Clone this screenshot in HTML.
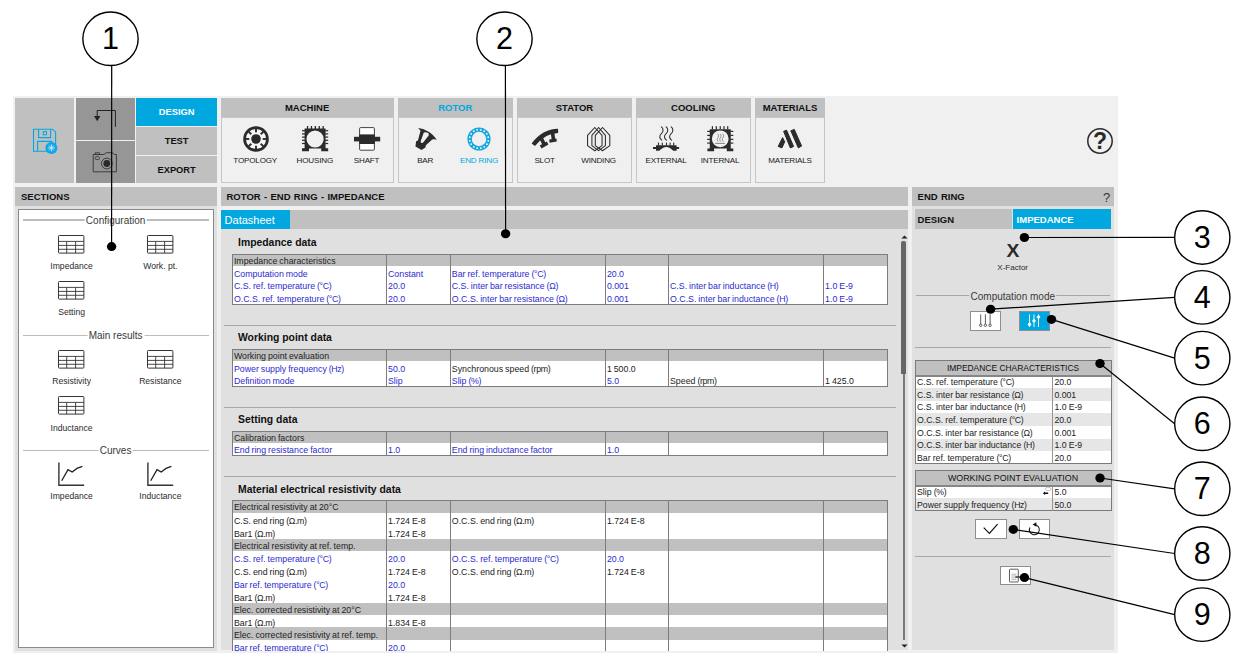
<!DOCTYPE html>
<html lang="en"><head><meta charset="utf-8"><title>Rotor - End ring - Impedance</title>
<style>
html,body{margin:0;padding:0;background:#fff;}
body{width:1243px;height:662px;overflow:hidden;font-family:"Liberation Sans",sans-serif;}
#page{position:relative;width:1243px;height:662px;overflow:hidden;background:#fff;}
#page div{position:absolute;box-sizing:border-box;}
#page svg{position:absolute;overflow:visible;}
.t{white-space:nowrap;line-height:1;transform:translateY(-50%);color:#222;}
.t.c{transform:translate(-50%,-50%);}
.hd{font-weight:bold;font-size:9.5px;color:#111;word-spacing:0.7px;}
.tab{font-weight:bold;font-size:9.3px;color:#111;}
.grp{font-weight:bold;font-size:9.5px;color:#111;}
.il{font-size:8.1px;color:#1a1a1a;letter-spacing:-0.2px;}
.sec{font-size:10px;color:#3a3a3a;}
.sl{font-size:8.6px;color:#2a2a2a;}
.ds{font-size:11px;color:#fff;}
.dt{font-weight:bold;font-size:10.4px;color:#111;margin-top:1px;}
.tx{font-size:8.8px;color:#222;word-spacing:-0.5px;}
.u{letter-spacing:-0.35px;}
.bl{color:#2b2bd0;}
.rh{font-size:8.45px;color:#111;}
.rt{font-size:8.72px;color:#222;word-spacing:-0.3px;}
.xf{font-weight:bold;font-size:18.2px;color:#2b2b2b;}
.t.c.xf{transform:translate(-50%,-50%) scaleX(1.06);}

</style></head><body>
<div id="page">
<div style="left:13px;top:96px;width:1105px;height:557px;background:#f0f0f0;"></div>
<div style="left:15px;top:98px;width:59.3px;height:85px;background:#c0c0c0;"></div>
<div style="left:75.5px;top:98px;width:59.5px;height:41.5px;background:#969696;"></div>
<div style="left:75.5px;top:141px;width:59.5px;height:42px;background:#969696;"></div>
<div style="left:136px;top:98px;width:81px;height:27.5px;background:#00a8df;"></div>
<div style="left:136px;top:127px;width:81px;height:27.5px;background:#c0c0c0;"></div>
<div style="left:136px;top:156px;width:81px;height:27px;background:#c0c0c0;"></div>
<div class="t c tab" style="left:176.6px;top:113.2px;color:#fff;">DESIGN</div>
<div class="t c tab" style="left:176.6px;top:142px;">TEST</div>
<div class="t c tab" style="left:176.6px;top:171px;">EXPORT</div>
<svg style="left:30px;top:125px" width="32" height="32" viewBox="0 0 32 32">
<path d="M3.5 4.2 H22.6 L25.6 7.2 V26.3 H3.5 Z" fill="none" stroke="#00a8df" stroke-width="1.1"/>
<path d="M8.6 4.2 V12.6 H20.6 V4.2" fill="none" stroke="#00a8df" stroke-width="1.1"/>
<rect x="13.3" y="6.6" width="3.2" height="3.2" fill="none" stroke="#00a8df" stroke-width="1"/>
<path d="M7.6 26.3 V16.4 H21.6 V18" fill="none" stroke="#00a8df" stroke-width="1.1"/>
<circle cx="21.4" cy="22.9" r="6" fill="#0ea6ea"/>
<g stroke="#e8f6fd" stroke-width="0.75" stroke-linecap="round"><path d="M21.4 19.7 V26.1"/><path d="M18.2 22.9 H24.6"/><path d="M19.15 20.65 L23.65 25.15"/><path d="M23.65 20.65 L19.15 25.15"/></g>
</svg>
<svg style="left:90px;top:105px" width="32" height="26" viewBox="0 0 32 26">
<path d="M7.2 11 V5.5 H25.4 V21.9" fill="none" stroke="#222" stroke-width="1"/>
<path d="M4 11 H10.4 L7.2 16.2 Z" fill="#222"/>
</svg>
<svg style="left:90px;top:150px" width="32" height="26" viewBox="0 0 32 26">
<path d="M3.2 4.5 H14 L16.2 2.7 H22.6 L24.2 4.5 H26.4 V21.8 H3.2 Z" fill="none" stroke="#333" stroke-width="0.9"/>
<rect x="5.3" y="2.8" width="4.2" height="1.7" fill="none" stroke="#333" stroke-width="0.8"/>
<rect x="5.2" y="6.7" width="4.2" height="2.8" rx="0.9" fill="none" stroke="#333" stroke-width="0.8"/>
<circle cx="16.8" cy="13.5" r="5.4" fill="none" stroke="#333" stroke-width="0.9"/>
<circle cx="16.8" cy="13.5" r="3.4" fill="#2a2a2a"/>
</svg>
<div style="left:220.6px;top:98px;width:173.00000000000003px;height:18.5px;background:#c0c0c0;"></div>
<div style="left:220.6px;top:116.5px;width:173.00000000000003px;height:66px;background:#f0f0f0;border:1px solid #c6c6c6;"></div>
<div class="t c grp" style="left:307.1px;top:107.6px;color:#111;">MACHINE</div>
<div style="left:397.5px;top:98px;width:115.5px;height:18.5px;background:#c0c0c0;"></div>
<div style="left:397.5px;top:116.5px;width:115.5px;height:66px;background:#f0f0f0;border:1px solid #c6c6c6;"></div>
<div class="t c grp" style="left:455.25px;top:107.6px;color:#00a8df;">ROTOR</div>
<div style="left:517px;top:98px;width:115px;height:18.5px;background:#c0c0c0;"></div>
<div style="left:517px;top:116.5px;width:115px;height:66px;background:#f0f0f0;border:1px solid #c6c6c6;"></div>
<div class="t c grp" style="left:574.5px;top:107.6px;color:#111;">STATOR</div>
<div style="left:636px;top:98px;width:114.5px;height:18.5px;background:#c0c0c0;"></div>
<div style="left:636px;top:116.5px;width:114.5px;height:66px;background:#f0f0f0;border:1px solid #c6c6c6;"></div>
<div class="t c grp" style="left:693.25px;top:107.6px;color:#111;">COOLING</div>
<div style="left:755px;top:98px;width:70px;height:18.5px;background:#c0c0c0;"></div>
<div style="left:755px;top:116.5px;width:70px;height:66px;background:#f0f0f0;border:1px solid #c6c6c6;"></div>
<div class="t c grp" style="left:790.0px;top:107.6px;color:#111;">MATERIALS</div>
<div class="t c il" style="left:255.2px;top:160.7px;">TOPOLOGY</div>
<div class="t c il" style="left:314.8px;top:160.7px;">HOUSING</div>
<div class="t c il" style="left:366.6px;top:160.7px;">SHAFT</div>
<div class="t c il" style="left:425.2px;top:160.7px;">BAR</div>
<div class="t c il" style="left:479px;top:160.7px;color:#00a8df;">END RING</div>
<div class="t c il" style="left:544.6px;top:160.7px;">SLOT</div>
<div class="t c il" style="left:598.6px;top:160.7px;">WINDING</div>
<div class="t c il" style="left:666px;top:160.7px;">EXTERNAL</div>
<div class="t c il" style="left:720px;top:160.7px;">INTERNAL</div>
<div class="t c il" style="left:790px;top:160.7px;">MATERIALS</div>
<svg style="left:242.8px;top:125.7px" width="26" height="26" viewBox="0 0 26 26">
<circle cx="13" cy="13" r="11.45" fill="#f6f6f6" stroke="#2b2b2b" stroke-width="2.7"/>
<path d="M19.70 13.00 L24.50 13.00" stroke="#2b2b2b" stroke-width="1.9"/><path d="M17.74 17.74 L21.13 21.13" stroke="#2b2b2b" stroke-width="1.9"/><path d="M13.00 19.70 L13.00 24.50" stroke="#2b2b2b" stroke-width="1.9"/><path d="M8.26 17.74 L4.87 21.13" stroke="#2b2b2b" stroke-width="1.9"/><path d="M6.30 13.00 L1.50 13.00" stroke="#2b2b2b" stroke-width="1.9"/><path d="M8.26 8.26 L4.87 4.87" stroke="#2b2b2b" stroke-width="1.9"/><path d="M13.00 6.30 L13.00 1.50" stroke="#2b2b2b" stroke-width="1.9"/><path d="M17.74 8.26 L21.13 4.87" stroke="#2b2b2b" stroke-width="1.9"/>
<circle cx="13" cy="13" r="4.8" fill="#2b2b2b"/>
</svg>
<svg style="left:301.8px;top:126.3px" width="26.2" height="25.4" viewBox="0 0 26.2 25.4">
<rect x="4.90" y="0" width="1.3" height="3" fill="#2b2b2b"/><rect x="8.80" y="0" width="1.3" height="3" fill="#2b2b2b"/><rect x="12.70" y="0" width="1.3" height="3" fill="#2b2b2b"/><rect x="16.60" y="0" width="1.3" height="3" fill="#2b2b2b"/><rect x="20.50" y="0" width="1.3" height="3" fill="#2b2b2b"/><rect x="0" y="4.10" width="3" height="1.2" fill="#2b2b2b"/><rect x="23.2" y="4.10" width="3" height="1.2" fill="#2b2b2b"/><rect x="0" y="7.30" width="3" height="1.2" fill="#2b2b2b"/><rect x="23.2" y="7.30" width="3" height="1.2" fill="#2b2b2b"/><rect x="0" y="10.50" width="3" height="1.2" fill="#2b2b2b"/><rect x="23.2" y="10.50" width="3" height="1.2" fill="#2b2b2b"/><rect x="0" y="13.70" width="3" height="1.2" fill="#2b2b2b"/><rect x="23.2" y="13.70" width="3" height="1.2" fill="#2b2b2b"/><rect x="0" y="16.90" width="3" height="1.2" fill="#2b2b2b"/><rect x="23.2" y="16.90" width="3" height="1.2" fill="#2b2b2b"/>
<path fill-rule="evenodd" fill="#2b2b2b" d="M2.6 2.6 H23.6 V22.2 H26.2 V25.2 H19.2 V22.6 H7 V25.2 H0 V22.2 H2.6 Z M13.1 4.4 A8.6 8.6 0 1 0 13.1 21.6 A8.6 8.6 0 1 0 13.1 4.4 Z"/>
</svg>
<svg style="left:353.8px;top:126.8px" width="26.2" height="24" viewBox="0 0 26.2 24">
<rect x="5.6" y="0.6" width="14.8" height="22.6" rx="1" fill="#fff" stroke="#2b2b2b" stroke-width="0.9"/>
<rect x="0" y="9.8" width="26.2" height="4.6" fill="#2b2b2b"/>
<rect x="5.2" y="7.4" width="15.6" height="9.6" fill="#2b2b2b"/>
</svg>
<svg style="left:414px;top:126px" width="24" height="26" viewBox="0 0 24 26">
<path fill-rule="evenodd" fill="#2b2b2b" d="M4.16 2.08 C10.4 2.7 18.3 6.9 22.75 13.64 L20.5 13.3 Q18.9 13 18.2 13.5 L11.87 19.3 L11.4 21.57 L7.56 24.07 L1.44 20.44 L2.12 15.23 L3.93 14.55 L6.52 4.8 Z M10.05 6.52 Q11.5 5.8 13.9 6.84 Q15.3 7.8 14.68 9.56 L9.15 16.59 Q8 17.5 7.2 16.7 Q6.5 16 6.7 15.3 L9.55 7.2 Q9.7 6.7 10.05 6.52 Z"/>
</svg>
<svg style="left:466.7px;top:127px" width="24" height="24" viewBox="0 0 24 24">
<circle cx="12" cy="12" r="9.4" fill="none" stroke="#19a7e0" stroke-width="4.4"/>
<circle cx="21.22" cy="13.83" r="0.9" fill="#fff"/><circle cx="19.82" cy="17.22" r="0.9" fill="#fff"/><circle cx="17.22" cy="19.82" r="0.9" fill="#fff"/><circle cx="13.83" cy="21.22" r="0.9" fill="#fff"/><circle cx="10.17" cy="21.22" r="0.9" fill="#fff"/><circle cx="6.78" cy="19.82" r="0.9" fill="#fff"/><circle cx="4.18" cy="17.22" r="0.9" fill="#fff"/><circle cx="2.78" cy="13.83" r="0.9" fill="#fff"/><circle cx="2.78" cy="10.17" r="0.9" fill="#fff"/><circle cx="4.18" cy="6.78" r="0.9" fill="#fff"/><circle cx="6.78" cy="4.18" r="0.9" fill="#fff"/><circle cx="10.17" cy="2.78" r="0.9" fill="#fff"/><circle cx="13.83" cy="2.78" r="0.9" fill="#fff"/><circle cx="17.22" cy="4.18" r="0.9" fill="#fff"/><circle cx="19.82" cy="6.78" r="0.9" fill="#fff"/><circle cx="21.22" cy="10.17" r="0.9" fill="#fff"/>
</svg>
<svg style="left:530px;top:126px" width="30" height="26" viewBox="0 0 30 26">
<path d="M3.3 18.7 Q13.4 5.3 28.1 4.9" fill="none" stroke="#2b2b2b" stroke-width="4.2"/>
<path d="M10.75 11.4 L14.13 18.13" stroke="#2b2b2b" stroke-width="3.6"/>
<path d="M10.6 20.9 L17.6 16.9" stroke="#2b2b2b" stroke-width="3.4"/>
<path d="M22.5 6.6 L23.5 13.8" stroke="#2b2b2b" stroke-width="3.6"/>
<path d="M19.4 15.1 L26.6 14" stroke="#2b2b2b" stroke-width="3.2"/>
</svg>
<svg style="left:586px;top:126px" width="26" height="26" viewBox="0 0 26 26">
<path d="M1.56 19.6 V9.4 L8.80 1.5 L16.04 9.4 V19.6 L8.80 24.7 Z" fill="none" stroke="#2b2b2b" stroke-width="1.05" stroke-linejoin="round"/><path d="M5.90 19.6 V9.4 L12.65 1.5 L19.40 9.4 V19.6 L12.65 24.7 Z" fill="none" stroke="#2b2b2b" stroke-width="1.05" stroke-linejoin="round"/><path d="M9.30 19.6 V9.4 L16.55 1.5 L23.80 9.4 V19.6 L16.55 24.7 Z" fill="none" stroke="#2b2b2b" stroke-width="1.05" stroke-linejoin="round"/>
</svg>
<svg style="left:653px;top:126px" width="26.2" height="26" viewBox="0 0 26.2 26">
<path d="M8.40 0.90 C10.60 2.48 10.60 5.78 8.40 7.63 C6.20 9.41 6.20 12.32 8.76 14.10" fill="none" stroke="#2b2b2b" stroke-width="1.05" stroke-linecap="round"/><path d="M13.10 0.90 C15.30 2.48 15.30 5.78 13.10 7.63 C10.90 9.41 10.90 12.32 13.46 14.10" fill="none" stroke="#2b2b2b" stroke-width="1.05" stroke-linecap="round"/><path d="M18.20 0.90 C20.40 2.48 20.40 5.78 18.20 7.63 C16.00 9.41 16.00 12.32 18.56 14.10" fill="none" stroke="#2b2b2b" stroke-width="1.05" stroke-linecap="round"/>
<rect x="4.95" y="16.6" width="1.1" height="3" fill="#2b2b2b"/><rect x="8.75" y="16.6" width="1.1" height="3" fill="#2b2b2b"/><rect x="12.95" y="16.6" width="1.1" height="3" fill="#2b2b2b"/><rect x="16.55" y="16.6" width="1.1" height="3" fill="#2b2b2b"/><rect x="20.15" y="16.6" width="1.1" height="3" fill="#2b2b2b"/>
<path fill="#2b2b2b" d="M3 19.2 H23.6 V21 H26.1 V23 H23.6 V24.8 H20.3 Q13.5 17.2 6.2 24.8 H3 V23 H0 V21 H3 Z"/>
</svg>
<svg style="left:706.8px;top:126px" width="26.5" height="25.6" viewBox="0 0 26.5 25.6">
<rect x="4.80" y="0.2" width="1.2" height="3.2" fill="#2b2b2b"/><rect x="8.70" y="0.2" width="1.2" height="3.2" fill="#2b2b2b"/><rect x="12.65" y="0.2" width="1.2" height="3.2" fill="#2b2b2b"/><rect x="16.40" y="0.2" width="1.2" height="3.2" fill="#2b2b2b"/><rect x="20.10" y="0.2" width="1.2" height="3.2" fill="#2b2b2b"/><rect x="0.2" y="4.80" width="2.8" height="1.2" fill="#2b2b2b"/><rect x="23.5" y="4.80" width="2.8" height="1.2" fill="#2b2b2b"/><rect x="0.2" y="8.80" width="2.8" height="1.2" fill="#2b2b2b"/><rect x="23.5" y="8.80" width="2.8" height="1.2" fill="#2b2b2b"/><rect x="0.2" y="12.80" width="2.8" height="1.2" fill="#2b2b2b"/><rect x="23.5" y="12.80" width="2.8" height="1.2" fill="#2b2b2b"/><rect x="0.2" y="16.50" width="2.8" height="1.2" fill="#2b2b2b"/><rect x="23.5" y="16.50" width="2.8" height="1.2" fill="#2b2b2b"/>
<path fill-rule="evenodd" fill="#2b2b2b" d="M2.75 3.2 H23.75 V22.4 H26.3 V25.3 H19.8 V22.6 H7.1 V25.3 H0.4 V22.4 H2.75 Z M13.25 4.4 A8.4 8.4 0 1 0 13.25 21.2 A8.4 8.4 0 1 0 13.25 4.4 Z"/>
<path d="M10.90 8.00 C11.82 8.89 11.82 10.74 10.90 11.77 C9.98 12.77 9.98 14.40 11.05 15.40" fill="none" stroke="#555" stroke-width="0.6" stroke-linecap="round"/><path d="M13.40 8.00 C14.32 8.89 14.32 10.74 13.40 11.77 C12.48 12.77 12.48 14.40 13.55 15.40" fill="none" stroke="#555" stroke-width="0.6" stroke-linecap="round"/><path d="M15.90 8.00 C16.82 8.89 16.82 10.74 15.90 11.77 C14.98 12.77 14.98 14.40 16.05 15.40" fill="none" stroke="#555" stroke-width="0.6" stroke-linecap="round"/>
<path d="M8.2 17.4 H18" stroke="#555" stroke-width="0.7"/>
</svg>
<svg style="left:776px;top:126px" width="28" height="26" viewBox="0 0 28 26">
<g fill="#2b2b2b" stroke="#2b2b2b" stroke-width="1" stroke-linejoin="round">
<path d="M7.6 5.3 L10.6 4.2 L17.6 20.5 L14.3 21.9 Z"/>
<path d="M14.8 4.8 L18.3 3.4 L25.6 20 L22.3 21.9 Z"/>
<path d="M6.6 11.6 L8.7 15.8 L5.9 21.9 L2.2 20.4 Z"/>
</g></svg>
<svg style="left:1085.7px;top:126.5px" width="28" height="28" viewBox="0 0 28 28">
<circle cx="14" cy="14" r="12.2" fill="none" stroke="#2b2b2b" stroke-width="1.5"/>
<text x="14" y="22.2" text-anchor="middle" font-family="Liberation Sans, sans-serif" font-weight="bold" font-size="23" fill="#2b2b2b">?</text>
</svg>
<div style="left:14.5px;top:187px;width:202.5px;height:19.1px;background:#c0c0c0;"></div>
<div class="t hd" style="left:21px;top:197.3px;">SECTIONS</div>
<div style="left:14.5px;top:206px;width:202.5px;height:444.5px;background:#e0e0e0;"></div>
<div style="left:17.8px;top:209.4px;width:196.2px;height:438.5px;background:#fff;border:1.3px solid #8a8a8a;"></div>
<div style="left:23px;top:219.3px;width:186px;height:1.4px;background:#bcbcbc;"></div>
<div class="t c sec" style="left:115.6px;top:220.8px;background:#fff;padding:0 1.5px;">Configuration</div>
<svg style="left:58.2px;top:234.6px" width="26.4" height="18.6" viewBox="0 0 26.4 18.6">
<rect x="0.5" y="0.5" width="25.4" height="17.6" rx="0.8" fill="#fff" stroke="#333" stroke-width="1"/>
<path d="M0.5 6.4 H25.9 M0.5 10.4 H25.9 M0.5 14.3 H25.9 M8.7 6.4 V18.1 M17.6 6.4 V18.1" fill="none" stroke="#333" stroke-width="0.9"/>
</svg>
<div class="t c sl" style="left:71.6px;top:266.2px;">Impedance</div>
<svg style="left:147.3px;top:234.6px" width="26.4" height="18.6" viewBox="0 0 26.4 18.6">
<rect x="0.5" y="0.5" width="25.4" height="17.6" rx="0.8" fill="#fff" stroke="#333" stroke-width="1"/>
<path d="M0.5 6.4 H25.9 M0.5 10.4 H25.9 M0.5 14.3 H25.9 M8.7 6.4 V18.1 M17.6 6.4 V18.1" fill="none" stroke="#333" stroke-width="0.9"/>
</svg>
<div class="t c sl" style="left:160.4px;top:266.2px;">Work. pt.</div>
<svg style="left:58.2px;top:281.1px" width="26.4" height="18.6" viewBox="0 0 26.4 18.6">
<rect x="0.5" y="0.5" width="25.4" height="17.6" rx="0.8" fill="#fff" stroke="#333" stroke-width="1"/>
<path d="M0.5 6.4 H25.9 M0.5 10.4 H25.9 M0.5 14.3 H25.9 M8.7 6.4 V18.1 M17.6 6.4 V18.1" fill="none" stroke="#333" stroke-width="0.9"/>
</svg>
<div class="t c sl" style="left:71.6px;top:312.4px;">Setting</div>
<div style="left:23px;top:334.6px;width:186px;height:1.4px;background:#bcbcbc;"></div>
<div class="t c sec" style="left:115.6px;top:336.1px;background:#fff;padding:0 1.5px;">Main results</div>
<svg style="left:58.2px;top:349.7px" width="26.4" height="18.6" viewBox="0 0 26.4 18.6">
<rect x="0.5" y="0.5" width="25.4" height="17.6" rx="0.8" fill="#fff" stroke="#333" stroke-width="1"/>
<path d="M0.5 6.4 H25.9 M0.5 10.4 H25.9 M0.5 14.3 H25.9 M8.7 6.4 V18.1 M17.6 6.4 V18.1" fill="none" stroke="#333" stroke-width="0.9"/>
</svg>
<div class="t c sl" style="left:71.6px;top:381px;">Resistivity</div>
<svg style="left:147.3px;top:349.7px" width="26.4" height="18.6" viewBox="0 0 26.4 18.6">
<rect x="0.5" y="0.5" width="25.4" height="17.6" rx="0.8" fill="#fff" stroke="#333" stroke-width="1"/>
<path d="M0.5 6.4 H25.9 M0.5 10.4 H25.9 M0.5 14.3 H25.9 M8.7 6.4 V18.1 M17.6 6.4 V18.1" fill="none" stroke="#333" stroke-width="0.9"/>
</svg>
<div class="t c sl" style="left:160.4px;top:381px;">Resistance</div>
<svg style="left:58.2px;top:396.3px" width="26.4" height="18.6" viewBox="0 0 26.4 18.6">
<rect x="0.5" y="0.5" width="25.4" height="17.6" rx="0.8" fill="#fff" stroke="#333" stroke-width="1"/>
<path d="M0.5 6.4 H25.9 M0.5 10.4 H25.9 M0.5 14.3 H25.9 M8.7 6.4 V18.1 M17.6 6.4 V18.1" fill="none" stroke="#333" stroke-width="0.9"/>
</svg>
<div class="t c sl" style="left:71.6px;top:427.5px;">Inductance</div>
<div style="left:23px;top:449.7px;width:186px;height:1.4px;background:#bcbcbc;"></div>
<div class="t c sec" style="left:115.6px;top:451.2px;background:#fff;padding:0 1.5px;">Curves</div>
<svg style="left:58.0px;top:462.0px" width="26.4" height="24" viewBox="0 0 26.4 24">
<path d="M0.9 0.6 V23.2 H26.2" fill="none" stroke="#333" stroke-width="1.4"/>
<path d="M3.7 18.8 L10 7.6 L14.2 10 L19 6.4 L24.4 4.3" fill="none" stroke="#222" stroke-width="1.3"/>
</svg>
<div class="t c sl" style="left:71.6px;top:496.3px;">Impedance</div>
<svg style="left:147.1px;top:462.0px" width="26.4" height="24" viewBox="0 0 26.4 24">
<path d="M0.9 0.6 V23.2 H26.2" fill="none" stroke="#333" stroke-width="1.4"/>
<path d="M3.7 18.8 L10 7.6 L14.2 10 L19 6.4 L24.4 4.3" fill="none" stroke="#222" stroke-width="1.3"/>
</svg>
<div class="t c sl" style="left:160.4px;top:496.3px;">Inductance</div>
<div style="left:220.6px;top:187px;width:687.3px;height:19.1px;background:#c0c0c0;"></div>
<div class="t hd" style="left:226.5px;top:197.3px;">ROTOR - END RING - IMPEDANCE</div>
<div style="left:220.6px;top:209.7px;width:687.3px;height:19.1px;background:#c0c0c0;"></div>
<div style="left:220.6px;top:209.7px;width:69.6px;height:19.1px;background:#00a8df;"></div>
<div class="t ds" style="left:224.6px;top:220.2px;">Datasheet</div>
<div class="content" style="left:220.6px;top:228.8px;width:687.3px;height:421.7px;background:#e0e0e0;overflow:hidden;"></div>
<div class="t dt" style="left:238px;top:242.4px;">Impedance data</div>
<div style="left:231.70000000000002px;top:254.1px;width:656.3px;height:50.900000000000006px;background:#fff;border:1.2px solid #7c7c7c;"></div>
<div style="left:232.9px;top:255.29999999999998px;width:653.8999999999999px;height:11.000000000000028px;background:#c0c0c0;"></div>
<div style="left:385.84999999999997px;top:255.1px;width:1.1px;height:48.900000000000006px;background:#7c7c7c;"></div>
<div style="left:449.65px;top:255.1px;width:1.1px;height:48.900000000000006px;background:#7c7c7c;"></div>
<div style="left:604.75px;top:255.1px;width:1.1px;height:48.900000000000006px;background:#7c7c7c;"></div>
<div style="left:667.85px;top:255.1px;width:1.1px;height:48.900000000000006px;background:#7c7c7c;"></div>
<div style="left:822.95px;top:255.1px;width:1.1px;height:48.900000000000006px;background:#7c7c7c;"></div>
<div class="t tx" style="left:233.9px;top:261.10px;">Impedance characteristics</div>
<div class="t tx bl" style="left:233.9px;top:273.95px;">Computation mode</div>
<div class="t tx bl" style="left:388.0px;top:273.95px;">Constant</div>
<div class="t tx bl" style="left:451.8px;top:273.95px;">Bar ref. temperature <span class="u">(°C)</span></div>
<div class="t tx bl" style="left:606.9px;top:273.95px;">20.0</div>
<div class="t tx bl" style="left:233.9px;top:286.45px;">C.S. ref. temperature <span class="u">(°C)</span></div>
<div class="t tx bl" style="left:388.0px;top:286.45px;">20.0</div>
<div class="t tx bl" style="left:451.8px;top:286.45px;">C.S. inter bar resistance <span class="u">(Ω)</span></div>
<div class="t tx bl" style="left:606.9px;top:286.45px;">0.001</div>
<div class="t tx bl" style="left:670.0px;top:286.45px;">C.S. inter bar inductance <span class="u">(H)</span></div>
<div class="t tx bl" style="left:825.1px;top:286.45px;">1.0 E-9</div>
<div class="t tx bl" style="left:233.9px;top:298.95px;">O.C.S. ref. temperature <span class="u">(°C)</span></div>
<div class="t tx bl" style="left:388.0px;top:298.95px;">20.0</div>
<div class="t tx bl" style="left:451.8px;top:298.95px;">O.C.S. inter bar resistance <span class="u">(Ω)</span></div>
<div class="t tx bl" style="left:606.9px;top:298.95px;">0.001</div>
<div class="t tx bl" style="left:670.0px;top:298.95px;">O.C.S. inter bar inductance <span class="u">(H)</span></div>
<div class="t tx bl" style="left:825.1px;top:298.95px;">1.0 E-9</div>
<div style="left:223.6px;top:325.0px;width:672.4px;height:1.2px;background:#a8a8a8;"></div>
<div class="t dt" style="left:238px;top:337.4px;">Working point data</div>
<div style="left:231.70000000000002px;top:349.0px;width:656.3px;height:38.39999999999998px;background:#fff;border:1.2px solid #7c7c7c;"></div>
<div style="left:232.9px;top:350.2px;width:653.8999999999999px;height:11.0px;background:#c0c0c0;"></div>
<div style="left:385.84999999999997px;top:350.0px;width:1.1px;height:36.39999999999998px;background:#7c7c7c;"></div>
<div style="left:449.65px;top:350.0px;width:1.1px;height:36.39999999999998px;background:#7c7c7c;"></div>
<div style="left:604.75px;top:350.0px;width:1.1px;height:36.39999999999998px;background:#7c7c7c;"></div>
<div style="left:667.85px;top:350.0px;width:1.1px;height:36.39999999999998px;background:#7c7c7c;"></div>
<div style="left:822.95px;top:350.0px;width:1.1px;height:36.39999999999998px;background:#7c7c7c;"></div>
<div class="t tx" style="left:233.9px;top:356.00px;">Working point evaluation</div>
<div class="t tx bl" style="left:233.9px;top:368.85px;">Power supply frequency <span class="u">(Hz)</span></div>
<div class="t tx bl" style="left:388.0px;top:368.85px;">50.0</div>
<div class="t tx" style="left:451.8px;top:368.85px;">Synchronous speed <span class="u">(rpm)</span></div>
<div class="t tx" style="left:606.9px;top:368.85px;">1 500.0</div>
<div class="t tx bl" style="left:233.9px;top:381.35px;">Definition mode</div>
<div class="t tx bl" style="left:388.0px;top:381.35px;">Slip</div>
<div class="t tx bl" style="left:451.8px;top:381.35px;">Slip <span class="u">(%)</span></div>
<div class="t tx bl" style="left:606.9px;top:381.35px;">5.0</div>
<div class="t tx" style="left:670.0px;top:381.35px;">Speed <span class="u">(rpm)</span></div>
<div class="t tx" style="left:825.1px;top:381.35px;">1 425.0</div>
<div style="left:223.6px;top:407.2px;width:672.4px;height:1.2px;background:#a8a8a8;"></div>
<div class="t dt" style="left:238px;top:419.2px;">Setting data</div>
<div style="left:231.70000000000002px;top:430.6px;width:656.3px;height:25.899999999999977px;background:#fff;border:1.2px solid #7c7c7c;"></div>
<div style="left:232.9px;top:431.8px;width:653.8999999999999px;height:11.0px;background:#c0c0c0;"></div>
<div style="left:385.84999999999997px;top:431.6px;width:1.1px;height:23.899999999999977px;background:#7c7c7c;"></div>
<div style="left:449.65px;top:431.6px;width:1.1px;height:23.899999999999977px;background:#7c7c7c;"></div>
<div style="left:604.75px;top:431.6px;width:1.1px;height:23.899999999999977px;background:#7c7c7c;"></div>
<div style="left:667.85px;top:431.6px;width:1.1px;height:23.899999999999977px;background:#7c7c7c;"></div>
<div style="left:822.95px;top:431.6px;width:1.1px;height:23.899999999999977px;background:#7c7c7c;"></div>
<div class="t tx" style="left:233.9px;top:437.60px;">Calibration factors</div>
<div class="t tx bl" style="left:233.9px;top:450.45px;">End ring resistance factor</div>
<div class="t tx bl" style="left:388.0px;top:450.45px;">1.0</div>
<div class="t tx bl" style="left:451.8px;top:450.45px;">End ring inductance factor</div>
<div class="t tx bl" style="left:606.9px;top:450.45px;">1.0</div>
<div style="left:223.6px;top:476.2px;width:672.4px;height:1.2px;background:#a8a8a8;"></div>
<div class="t dt" style="left:238px;top:488.7px;">Material electrical resistivity data</div>
<div style="left:231.70000000000002px;top:500.2px;width:656.3px;height:150.40000000000003px;background:#fff;border:1.2px solid #7c7c7c;border-bottom:none;"></div>
<div style="left:232.9px;top:501.4px;width:653.8999999999999px;height:11.300000000000068px;background:#c0c0c0;"></div>
<div style="left:232.9px;top:538.8px;width:653.8999999999999px;height:12.400000000000091px;background:#c0c0c0;"></div>
<div style="left:232.9px;top:602.5px;width:653.8999999999999px;height:12.299999999999955px;background:#c0c0c0;"></div>
<div style="left:232.9px;top:627.4px;width:653.8999999999999px;height:12.700000000000045px;background:#c0c0c0;"></div>
<div style="left:385.84999999999997px;top:501.2px;width:1.1px;height:149.40000000000003px;background:#7c7c7c;"></div>
<div style="left:449.65px;top:501.2px;width:1.1px;height:149.40000000000003px;background:#7c7c7c;"></div>
<div style="left:604.75px;top:501.2px;width:1.1px;height:149.40000000000003px;background:#7c7c7c;"></div>
<div style="left:667.85px;top:501.2px;width:1.1px;height:149.40000000000003px;background:#7c7c7c;"></div>
<div style="left:822.95px;top:501.2px;width:1.1px;height:149.40000000000003px;background:#7c7c7c;"></div>
<div class="t tx" style="left:233.9px;top:507.35px;">Electrical resistivity at 20°C</div>
<div class="t tx" style="left:233.9px;top:520.62px;">C.S. end ring <span class="u">(Ω.m)</span></div>
<div class="t tx" style="left:388.0px;top:520.62px;">1.724 E-8</div>
<div class="t tx" style="left:451.8px;top:520.62px;">O.C.S. end ring <span class="u">(Ω.m)</span></div>
<div class="t tx" style="left:606.9px;top:520.62px;">1.724 E-8</div>
<div class="t tx" style="left:233.9px;top:533.67px;">Bar1 <span class="u">(Ω.m)</span></div>
<div class="t tx" style="left:388.0px;top:533.67px;">1.724 E-8</div>
<div class="t tx" style="left:233.9px;top:546.40px;">Electrical resistivity at ref. temp.</div>
<div class="t tx bl" style="left:233.9px;top:559.00px;">C.S. ref. temperature <span class="u">(°C)</span></div>
<div class="t tx bl" style="left:388.0px;top:559.00px;">20.0</div>
<div class="t tx bl" style="left:451.8px;top:559.00px;">O.C.S. ref. temperature <span class="u">(°C)</span></div>
<div class="t tx bl" style="left:606.9px;top:559.00px;">20.0</div>
<div class="t tx" style="left:233.9px;top:571.82px;">C.S. end ring <span class="u">(Ω.m)</span></div>
<div class="t tx" style="left:388.0px;top:571.82px;">1.724 E-8</div>
<div class="t tx" style="left:451.8px;top:571.82px;">O.C.S. end ring <span class="u">(Ω.m)</span></div>
<div class="t tx" style="left:606.9px;top:571.82px;">1.724 E-8</div>
<div class="t tx bl" style="left:233.9px;top:584.68px;">Bar ref. temperature <span class="u">(°C)</span></div>
<div class="t tx bl" style="left:388.0px;top:584.68px;">20.0</div>
<div class="t tx" style="left:233.9px;top:597.50px;">Bar1 <span class="u">(Ω.m)</span></div>
<div class="t tx" style="left:388.0px;top:597.50px;">1.724 E-8</div>
<div class="t tx" style="left:233.9px;top:610.05px;">Elec. corrected resistivity at 20°C</div>
<div class="t tx" style="left:233.9px;top:622.50px;">Bar1 <span class="u">(Ω.m)</span></div>
<div class="t tx" style="left:388.0px;top:622.50px;">1.834 E-8</div>
<div class="t tx" style="left:233.9px;top:635.15px;">Elec. corrected resistivity at ref. temp.</div>
<div class="t tx bl" style="left:233.9px;top:647.85px;">Bar ref. temperature <span class="u">(°C)</span></div>
<div class="t tx bl" style="left:388.0px;top:647.85px;">20.0</div>
<div style="left:13px;top:650.5px;width:1105px;height:2.5px;background:#f0f0f0;"></div>
<div style="left:0px;top:653px;width:1243px;height:9px;background:#fff;"></div>
<div style="left:902.5px;top:243px;width:2.2px;height:397px;background:#777;"></div>
<div style="left:901px;top:241.3px;width:5px;height:132.5px;background:#666;border-radius:2px 2px 0 0;"></div>
<svg style="left:900.6px;top:235px" width="7" height="4" viewBox="0 0 7 4"><path d="M0.4 3.6 L3.5 0.4 L6.6 3.6 Z" fill="#222"/></svg>
<svg style="left:900.6px;top:644.4px" width="7" height="4" viewBox="0 0 7 4"><path d="M0.4 0.4 L3.5 3.6 L6.6 0.4 Z" fill="#222"/></svg>
<div style="left:912.1px;top:187px;width:202px;height:19.1px;background:#c0c0c0;"></div>
<div class="t hd" style="left:917.6px;top:197.3px;">END RING</div>
<div class="t tx" style="left:1103px;top:197.2px;font-size:13px;color:#333;">?</div>
<div style="left:912px;top:206.2px;width:202px;height:444.3px;background:#e0e0e0;"></div>
<div style="left:914.6px;top:209.2px;width:97.6px;height:19.4px;background:#c0c0c0;"></div>
<div style="left:1013px;top:209.2px;width:98.2px;height:19.4px;background:#00a8df;"></div>
<div class="t hd" style="left:917.6px;top:219.6px;">DESIGN</div>
<div class="t hd" style="left:1016.6px;top:219.6px;color:#fff;">IMPEDANCE</div>
<div class="t c xf" style="left:1012.6px;top:251.4px;">X</div>
<div class="t c sl" style="left:1012.7px;top:268px;font-size:8px;">X-Factor</div>
<div style="left:915.7px;top:295.1px;width:194.5999999999999px;height:1.4px;background:#a6a6a6;"></div>
<div class="t c sec" style="left:1012.8px;top:296.6px;background:#e0e0e0;padding:0 1.5px;">Computation mode</div>
<div style="left:969.6px;top:311.1px;width:31.4px;height:19.7px;background:#fff;border:1.2px solid #8e8e8e;"></div>
<div style="left:1019px;top:311.1px;width:31.4px;height:19.7px;background:#00a8df;border:1.2px solid #8e8e8e;"></div>
<svg style="left:969.6px;top:311.2px" width="31.4" height="19.3" viewBox="0 0 31.4 19.3">
<g stroke="#333" stroke-width="0.8" fill="#fff">
<path d="M10.7 3.4 V13"/><path d="M15.4 3.4 V13"/><path d="M20.1 3.4 V13"/>
<circle cx="10.7" cy="14.3" r="1.2"/><circle cx="15.4" cy="14.3" r="1.2"/><circle cx="20.1" cy="14.3" r="1.2"/>
</g></svg>
<svg style="left:1019px;top:311.2px" width="31.4" height="19.3" viewBox="0 0 31.4 19.3">
<g stroke="#fff" stroke-width="0.9" fill="#fff">
<path d="M10.5 3.4 V16"/><path d="M15 3.4 V16"/><path d="M19.5 3.4 V16"/>
<circle cx="10.5" cy="13.4" r="1.3"/><circle cx="15" cy="9.8" r="1.3"/><circle cx="19.5" cy="6" r="1.3"/>
</g></svg>
<div style="left:915px;top:347px;width:196px;height:1.2px;background:#a8a8a8;"></div>
<div style="left:914.5px;top:359.9px;width:197px;height:104.3px;background:#fff;border:1px solid #7a7a7a;"></div>
<div style="left:915.5px;top:360.9px;width:195px;height:14.2px;background:#c0c0c0;"></div>
<div class="t c rh" style="left:1013.0px;top:368.0px;">IMPEDANCE CHARACTERISTICS</div>
<div class="t rt" style="left:917px;top:382.1px;">C.S. ref. temperature <span class="u">(°C)</span></div>
<div class="t rt" style="left:1054.4px;top:382.1px;">20.0</div>
<div style="left:915.5px;top:388.1px;width:195px;height:12.6px;background:#e6e6e6;"></div>
<div class="t rt" style="left:917px;top:394.70000000000005px;">C.S. inter bar resistance <span class="u">(Ω)</span></div>
<div class="t rt" style="left:1054.4px;top:394.70000000000005px;">0.001</div>
<div class="t rt" style="left:917px;top:407.3px;">C.S. inter bar inductance <span class="u">(H)</span></div>
<div class="t rt" style="left:1054.4px;top:407.3px;">1.0 E-9</div>
<div style="left:915.5px;top:413.3px;width:195px;height:12.6px;background:#e6e6e6;"></div>
<div class="t rt" style="left:917px;top:419.90000000000003px;">O.C.S. ref. temperature <span class="u">(°C)</span></div>
<div class="t rt" style="left:1054.4px;top:419.90000000000003px;">20.0</div>
<div class="t rt" style="left:917px;top:432.5px;">O.C.S. inter bar resistance <span class="u">(Ω)</span></div>
<div class="t rt" style="left:1054.4px;top:432.5px;">0.001</div>
<div style="left:915.5px;top:438.5px;width:195px;height:12.6px;background:#e6e6e6;"></div>
<div class="t rt" style="left:917px;top:445.1px;">O.C.S. inter bar inductance <span class="u">(H)</span></div>
<div class="t rt" style="left:1054.4px;top:445.1px;">1.0 E-9</div>
<div class="t rt" style="left:917px;top:457.70000000000005px;">Bar ref. temperature <span class="u">(°C)</span></div>
<div class="t rt" style="left:1054.4px;top:457.70000000000005px;">20.0</div>
<div style="left:1051.8000000000002px;top:375.5px;width:1.3px;height:88.2px;background:#959595;"></div>
<div style="left:915.5px;top:375.0px;width:195px;height:1.7px;background:#868686;"></div>
<div style="left:914.5px;top:469.8px;width:197px;height:41.3px;background:#fff;border:1px solid #7a7a7a;"></div>
<div style="left:915.5px;top:470.8px;width:195px;height:14.2px;background:#c0c0c0;"></div>
<div class="t c rh" style="left:1013.0px;top:477.90000000000003px;font-size:8.9px;">WORKING POINT EVALUATION</div>
<div class="t rt" style="left:917px;top:492.00000000000006px;">Slip <span class="u">(%)</span></div>
<div class="t rt" style="left:1054.4px;top:492.00000000000006px;">5.0</div>
<div style="left:915.5px;top:498.00000000000006px;width:195px;height:12.1px;background:#e6e6e6;"></div>
<div class="t rt" style="left:917px;top:504.6000000000001px;">Power supply frequency <span class="u">(Hz)</span></div>
<div class="t rt" style="left:1054.4px;top:504.6000000000001px;">50.0</div>
<div style="left:1051.8000000000002px;top:485.40000000000003px;width:1.3px;height:25.199999999999996px;background:#959595;"></div>
<div style="left:915.5px;top:484.90000000000003px;width:195px;height:1.7px;background:#868686;"></div>
<svg style="left:1042px;top:487.4px" width="10" height="9" viewBox="0 0 10 9">
<rect x="3.5" y="0.4" width="5.4" height="3.2" rx="1.6" fill="none" stroke="#b4b4b4" stroke-width="0.75"/>
<path d="M0.8 6.2 L3.1 4.5 V5.4 H6.2 V7 H3.1 V7.9 Z" fill="#111"/>
</svg>
<div style="left:975.4px;top:519.3px;width:31.3px;height:19.5px;background:#fff;border:1.2px solid #8e8e8e;"></div>
<div style="left:1018.8px;top:519.3px;width:31.4px;height:19.5px;background:#fff;border:1.2px solid #8e8e8e;"></div>
<svg style="left:975.4px;top:519.3px" width="31.3" height="19.5" viewBox="0 0 31.3 19.5">
<path d="M8.7 8.7 L14.4 14.4 L22.6 5.1" fill="none" stroke="#111" stroke-width="1.2"/></svg>
<svg style="left:1018.8px;top:519.3px" width="31.4" height="19.5" viewBox="0 0 31.4 19.5">
<path d="M15.4 5.7 A5 5 0 1 1 10.9 8.4" fill="none" stroke="#111" stroke-width="1.05"/>
<path d="M17.3 3.2 L13.6 5.6 L17.5 7.7 Z" fill="#111"/></svg>
<div style="left:915px;top:555.6px;width:196px;height:1.2px;background:#a8a8a8;"></div>
<div style="left:999.7px;top:566.4px;width:31.2px;height:19.1px;background:#fff;border:1.2px solid #8e8e8e;"></div>
<svg style="left:999.7px;top:566.4px" width="31.2" height="19.1" viewBox="0 0 31.2 19.1">
<rect x="9.5" y="3.2" width="8.8" height="12.8" rx="0.8" fill="#fff" stroke="#333" stroke-width="0.8"/>
<path d="M11.4 8.2 H16.4 M11.4 10 H16.4 M11.4 11.8 H16.4 M11.4 13.6 H16.4" stroke="#999" stroke-width="0.7"/>
<path d="M15.4 11 H21" stroke="#444" stroke-width="1.6"/><path d="M20.4 8.6 L23.4 11 L20.4 13.4 Z" fill="#444"/>
</svg>
<svg style="left:0;top:0" width="1243" height="662" viewBox="0 0 1243 662">
<path d="M111.7 60.0 L111.6 246.6" stroke="#000" stroke-width="1.2" fill="none"/>
<ellipse cx="111.6" cy="246.6" rx="4.7" ry="4.5" fill="#000"/>
<ellipse cx="110.5" cy="38.8" rx="27.65" ry="26.75" fill="#fff" stroke="#000" stroke-width="1.4"/>
<text x="110.5" y="49.4" text-anchor="middle" font-family="Liberation Sans, sans-serif" font-size="30.5" fill="#000">1</text>
</svg>
<svg style="left:0;top:0" width="1243" height="662" viewBox="0 0 1243 662">
<path d="M505.4 60.0 L505.6 233.7" stroke="#000" stroke-width="1.2" fill="none"/>
<ellipse cx="505.6" cy="233.7" rx="4.7" ry="4.5" fill="#000"/>
<ellipse cx="504.5" cy="38.8" rx="27.65" ry="26.75" fill="#fff" stroke="#000" stroke-width="1.4"/>
<text x="504.5" y="49.4" text-anchor="middle" font-family="Liberation Sans, sans-serif" font-size="30.5" fill="#000">2</text>
</svg>
<svg style="left:0;top:0" width="1243" height="662" viewBox="0 0 1243 662">
<path d="M1174.6 237.4 L1024.4 237.5" stroke="#000" stroke-width="1.2" fill="none"/>
<ellipse cx="1024.4" cy="237.5" rx="4.7" ry="4.5" fill="#000"/>
<ellipse cx="1202.3" cy="237.45" rx="27.65" ry="26.75" fill="#fff" stroke="#000" stroke-width="1.4"/>
<text x="1202.3" y="248.0" text-anchor="middle" font-family="Liberation Sans, sans-serif" font-size="30.5" fill="#000">3</text>
</svg>
<svg style="left:0;top:0" width="1243" height="662" viewBox="0 0 1243 662">
<path d="M1174.6 297.4 L990.6 309.2" stroke="#000" stroke-width="1.2" fill="none"/>
<ellipse cx="990.6" cy="309.2" rx="4.7" ry="4.5" fill="#000"/>
<ellipse cx="1202.3" cy="297.35" rx="27.65" ry="26.75" fill="#fff" stroke="#000" stroke-width="1.4"/>
<text x="1202.3" y="308.0" text-anchor="middle" font-family="Liberation Sans, sans-serif" font-size="30.5" fill="#000">4</text>
</svg>
<svg style="left:0;top:0" width="1243" height="662" viewBox="0 0 1243 662">
<path d="M1174.6 358.1 L1051.5 319.4" stroke="#000" stroke-width="1.2" fill="none"/>
<ellipse cx="1051.5" cy="319.4" rx="4.7" ry="4.5" fill="#000"/>
<ellipse cx="1202.3" cy="358.1" rx="27.65" ry="26.75" fill="#fff" stroke="#000" stroke-width="1.4"/>
<text x="1202.3" y="368.7" text-anchor="middle" font-family="Liberation Sans, sans-serif" font-size="30.5" fill="#000">5</text>
</svg>
<svg style="left:0;top:0" width="1243" height="662" viewBox="0 0 1243 662">
<path d="M1174.6 423.8 L1100.0 363.5" stroke="#000" stroke-width="1.2" fill="none"/>
<ellipse cx="1100" cy="363.5" rx="4.7" ry="4.5" fill="#000"/>
<ellipse cx="1202.3" cy="423.8" rx="27.65" ry="26.75" fill="#fff" stroke="#000" stroke-width="1.4"/>
<text x="1202.3" y="434.4" text-anchor="middle" font-family="Liberation Sans, sans-serif" font-size="30.5" fill="#000">6</text>
</svg>
<svg style="left:0;top:0" width="1243" height="662" viewBox="0 0 1243 662">
<path d="M1174.6 488.8 L1100.0 478.0" stroke="#000" stroke-width="1.2" fill="none"/>
<ellipse cx="1100" cy="478" rx="4.7" ry="4.5" fill="#000"/>
<ellipse cx="1202.3" cy="488.8" rx="27.65" ry="26.75" fill="#fff" stroke="#000" stroke-width="1.4"/>
<text x="1202.3" y="499.4" text-anchor="middle" font-family="Liberation Sans, sans-serif" font-size="30.5" fill="#000">7</text>
</svg>
<svg style="left:0;top:0" width="1243" height="662" viewBox="0 0 1243 662">
<path d="M1174.6 553.5 L1013.3 529.4" stroke="#000" stroke-width="1.2" fill="none"/>
<ellipse cx="1013.3" cy="529.4" rx="4.7" ry="4.5" fill="#000"/>
<ellipse cx="1202.3" cy="553.5" rx="27.65" ry="26.75" fill="#fff" stroke="#000" stroke-width="1.4"/>
<text x="1202.3" y="564.1" text-anchor="middle" font-family="Liberation Sans, sans-serif" font-size="30.5" fill="#000">8</text>
</svg>
<svg style="left:0;top:0" width="1243" height="662" viewBox="0 0 1243 662">
<path d="M1174.6 614.6 L1024.5 577.6" stroke="#000" stroke-width="1.2" fill="none"/>
<ellipse cx="1024.5" cy="577.6" rx="4.7" ry="4.5" fill="#000"/>
<ellipse cx="1202.3" cy="614.6" rx="27.65" ry="26.75" fill="#fff" stroke="#000" stroke-width="1.4"/>
<text x="1202.3" y="625.2" text-anchor="middle" font-family="Liberation Sans, sans-serif" font-size="30.5" fill="#000">9</text>
</svg>
</div></body></html>
